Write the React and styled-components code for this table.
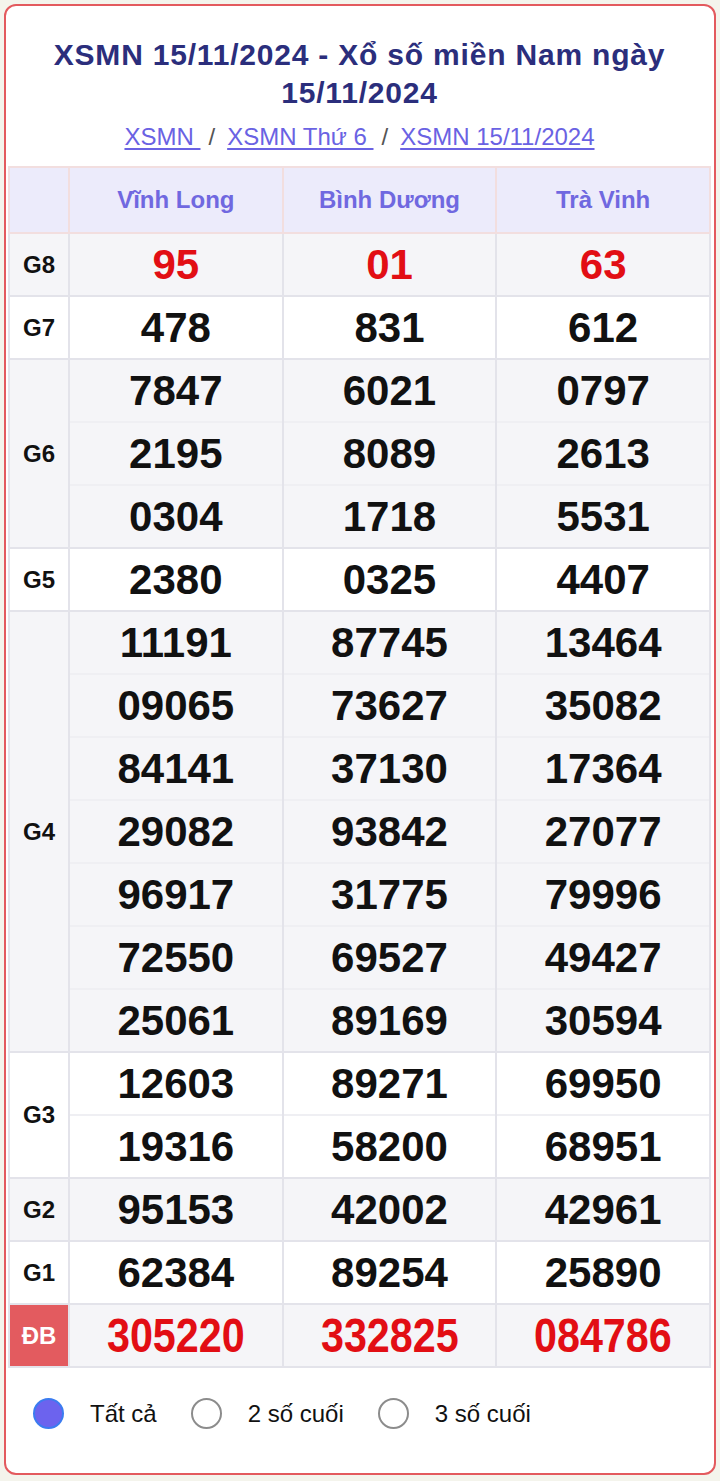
import React from "react";
import styled, { createGlobalStyle } from "styled-components";

const GlobalStyle = createGlobalStyle`
    html, body {
        margin: 0;
        padding: 0;
        background: #f4f4ec;
        font-family: "Liberation Sans", Arial, sans-serif;
    }
`;

const Page = styled.div`
    padding: 4px;
`;

const Card = styled.div`
    border: 2px solid #e35a5e;
    border-radius: 12px;
    background: #fff;
    padding: 0 3px 0 2px;
    overflow: hidden;
`;

const Title = styled.h1`
    margin: 0;
    padding: 30px 10px 0;
    text-align: center;
    font-size: 30px;
    line-height: 38px;
    letter-spacing: 0.8px;
    font-weight: 700;
    color: #2b2e7c;
`;

const Crumbs = styled.div`
    text-align: center;
    font-size: 24px;
    line-height: 30px;
    margin: 10px 0 14px;
    color: #444;

    a {
        color: #6a62e3;
        text-decoration: underline;
        text-underline-offset: 3px;
    }
`;

const Sep = styled.span`
    margin: 0 12px 0 8px;
    color: #555;
`;

const Table = styled.table`
    width: 100%;
    border-collapse: collapse;
    table-layout: fixed;
`;

const HeadRow = styled.tr`
    background: #ecebfb;
    height: 66px;
`;

const HeadCell = styled.th`
    border: 2px solid #f2dedf;
    color: #7068e0;
    font-size: 24px;
    font-weight: 700;
    text-align: center;
    padding: 0;
`;

const GroupRow = styled.tr`
    background: ${(p) => (p.$shade ? "#f5f5f8" : "#fff")};
`;

const LabelCell = styled.td`
    border: 2px solid #e3e3ea;
    text-align: center;
    font-size: 24px;
    font-weight: 700;
    color: ${(p) => (p.$special ? "#fff" : "#111")};
    background: ${(p) => (p.$special ? "#e35b5f" : "transparent")};
    padding: 0;
`;

const NumCell = styled.td`
    border: 2px solid #e3e3ea;
    padding: 0;
`;

const Num = styled.div`
    height: 61px;
    display: flex;
    align-items: center;
    justify-content: center;
    font-weight: 700;
    font-size: ${(p) => (p.$special ? "48px" : "42px")};
    color: ${(p) => (p.$red ? "#e20e14" : "#111")};
    transform: ${(p) => (p.$special ? "scaleX(0.86)" : "none")};

    & + & {
        border-top: 2px solid #efeff3;
    }
`;

const Filters = styled.div`
    display: flex;
    align-items: center;
    gap: 34px;
    padding: 30px 25px 44px;
`;

const Option = styled.label`
    display: flex;
    align-items: center;
    gap: 26px;
    font-size: 24px;
    line-height: 30px;
    color: #111;
`;

const Radio = styled.span`
    width: 31px;
    height: 31px;
    border-radius: 50%;
    box-sizing: border-box;
    border: 2px solid ${(p) => (p.$on ? "#3b7cf0" : "#8c8c8c")};
    background: ${(p) => (p.$on ? "#6c63ee" : "#fff")};
`;

const provinces = ["Vĩnh Long", "Bình Dương", "Trà Vinh"];

const prizes = [
    { label: "G8", red: true, nums: [["95"], ["01"], ["63"]] },
    { label: "G7", nums: [["478"], ["831"], ["612"]] },
    {
        label: "G6",
        nums: [
            ["7847", "2195", "0304"],
            ["6021", "8089", "1718"],
            ["0797", "2613", "5531"],
        ],
    },
    { label: "G5", nums: [["2380"], ["0325"], ["4407"]] },
    {
        label: "G4",
        nums: [
            ["11191", "09065", "84141", "29082", "96917", "72550", "25061"],
            ["87745", "73627", "37130", "93842", "31775", "69527", "89169"],
            ["13464", "35082", "17364", "27077", "79996", "49427", "30594"],
        ],
    },
    {
        label: "G3",
        nums: [
            ["12603", "19316"],
            ["89271", "58200"],
            ["69950", "68951"],
        ],
    },
    { label: "G2", nums: [["95153"], ["42002"], ["42961"]] },
    { label: "G1", nums: [["62384"], ["89254"], ["25890"]] },
    { label: "ĐB", red: true, special: true, nums: [["305220"], ["332825"], ["084786"]] },
];

export default function App() {
    return (
        <Page>
            <GlobalStyle />
            <Card>
                <Title>XSMN 15/11/2024 - Xổ số miền Nam ngày 15/11/2024</Title>
                <Crumbs>
                    <a href="#">XSMN </a>
                    <Sep>/</Sep>
                    <a href="#">XSMN Thứ 6 </a>
                    <Sep>/</Sep>
                    <a href="#">XSMN 15/11/2024</a>
                </Crumbs>
                <Table>
                    <colgroup>
                        <col style={{ width: 60 }} />
                        <col />
                        <col />
                        <col />
                    </colgroup>
                    <thead>
                        <HeadRow>
                            <HeadCell />
                            {provinces.map((p) => (
                                <HeadCell key={p}>{p}</HeadCell>
                            ))}
                        </HeadRow>
                    </thead>
                    <tbody>
                        {prizes.map((g, i) => (
                            <GroupRow key={g.label} $shade={i % 2 === 0}>
                                <LabelCell $special={g.special}>{g.label}</LabelCell>
                                {g.nums.map((col, c) => (
                                    <NumCell key={c}>
                                        {col.map((n) => (
                                            <Num key={n} $red={g.red} $special={g.special}>
                                                {n}
                                            </Num>
                                        ))}
                                    </NumCell>
                                ))}
                            </GroupRow>
                        ))}
                    </tbody>
                </Table>
                <Filters>
                    <Option>
                        <Radio $on />
                        Tất cả
                    </Option>
                    <Option>
                        <Radio />
                        2 số cuối
                    </Option>
                    <Option>
                        <Radio />
                        3 số cuối
                    </Option>
                </Filters>
            </Card>
        </Page>
    );
}
